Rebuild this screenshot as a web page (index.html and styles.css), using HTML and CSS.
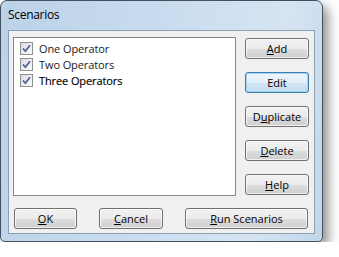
FILE: index.html
```html
<!DOCTYPE html>
<html lang="en">
<head>
    <meta charset="UTF-8">
    <title>Scenarios</title>
    <link rel="stylesheet" href="styles.css">
</head>
<body>
<div class="window">
    <div class="titlebar">Scenarios</div>
    <div class="client">
        <div class="top-row">
            <div class="listbox">
                <div class="item">
                    <span class="check"><svg width="9" height="9" viewBox="0 0 9 9"><path d="M1 4.5 L3.3 7.2 L8 1.2" fill="none" stroke="#4a5f97" stroke-width="1.7"/></svg></span>
                    One Operator
                </div>
                <div class="item">
                    <span class="check"><svg width="9" height="9" viewBox="0 0 9 9"><path d="M1 4.5 L3.3 7.2 L8 1.2" fill="none" stroke="#4a5f97" stroke-width="1.7"/></svg></span>
                    Two Operators
                </div>
                <div class="item focused">
                    <span class="check"><svg width="9" height="9" viewBox="0 0 9 9"><path d="M1 4.5 L3.3 7.2 L8 1.2" fill="none" stroke="#4a5f97" stroke-width="1.7"/></svg></span>
                    Three Operators
                </div>
            </div>
            <div class="side-buttons">
                <button class="btn"><u>A</u>dd</button>
                <button class="btn default">Edit</button>
                <button class="btn">D<u>u</u>plicate</button>
                <button class="btn"><u>D</u>elete</button>
                <button class="btn"><u>H</u>elp</button>
            </div>
        </div>
        <div class="bottom-row">
            <button class="btn ok"><u>O</u>K</button>
            <button class="btn cancel"><u>C</u>ancel</button>
            <button class="btn run"><u>R</u>un Scenarios</button>
        </div>
    </div>
</div>
</body>
</html>
```

FILE: styles.css
```css
body {
    margin: 0;
    background-color: #fff;
    font-family: "Open Sans", "Noto Sans", sans-serif;
    font-size: 12px;
    color: #000;
}

.window {
    width: 323px;
    height: 242px;
    box-sizing: border-box;
    border: 1px solid #45505e;
    border-radius: 7px 7px 5px 5px;
    background: linear-gradient(100deg, #bcd2e9 0%, #c9dcef 45%, #d6e4f2 80%, #c2d6ea 100%);
    box-shadow: 5px 6px 12px rgba(0, 0, 0, 0.45);
    padding: 0 7px 8px 7px;
}

.titlebar {
    height: 29px;
    line-height: 28px;
    font-size: 12px;
    letter-spacing: -0.3px;
}

.client {
    height: 204px;
    box-sizing: border-box;
    background-color: #f0f0f0;
    border: 1px solid #8d9fb3;
    padding: 6px 0 0 4px;
}

.top-row {
    display: flex;
}

.listbox {
    width: 223px;
    height: 159px;
    box-sizing: border-box;
    background-color: #fff;
    border: 1px solid #828790;
    padding: 2px 0 0 6px;
}

.item {
    display: flex;
    align-items: center;
    height: 16px;
    font-size: 11px;
    color: #1a1a1a;
    letter-spacing: -0.1px;
}

.item.focused {
    color: #000;
    -webkit-text-stroke: 0.15px #000;
}

.check {
    width: 13px;
    height: 13px;
    box-sizing: border-box;
    border: 1px solid #8e8f8f;
    background: linear-gradient(135deg, #dcdcdc, #fdfdfd);
    display: flex;
    align-items: center;
    justify-content: center;
    margin-right: 6px;
}

.side-buttons {
    display: flex;
    flex-direction: column;
    gap: 13px;
    margin-left: 9px;
    padding-top: 1px;
}

.btn {
    width: 64px;
    height: 21px;
    padding: 0;
    font-family: "Open Sans", "Noto Sans", sans-serif;
    font-size: 11px;
    color: #000;
    border: 1px solid #707070;
    border-radius: 3px;
    background: linear-gradient(#f2f2f2 0%, #ebebeb 50%, #dddddd 51%, #cfcfcf 100%);
    box-shadow: inset 0 0 0 1px rgba(255, 255, 255, 0.7);
}

.btn.default {
    border-color: #3c7fb1;
    background: linear-gradient(#eef6fc 0%, #e2eff9 50%, #d2e6f5 51%, #c4ddf1 100%);
    box-shadow: inset 0 0 0 1px #a6d4f0;
}

.btn u {
    text-underline-offset: 1px;
}

.bottom-row {
    display: flex;
    margin-top: 12px;
    padding-left: 1px;
}

.btn.ok {
    width: 63px;
}

.btn.cancel {
    margin-left: 22px;
}

.btn.run {
    width: 123px;
    margin-left: 22px;
}
```
